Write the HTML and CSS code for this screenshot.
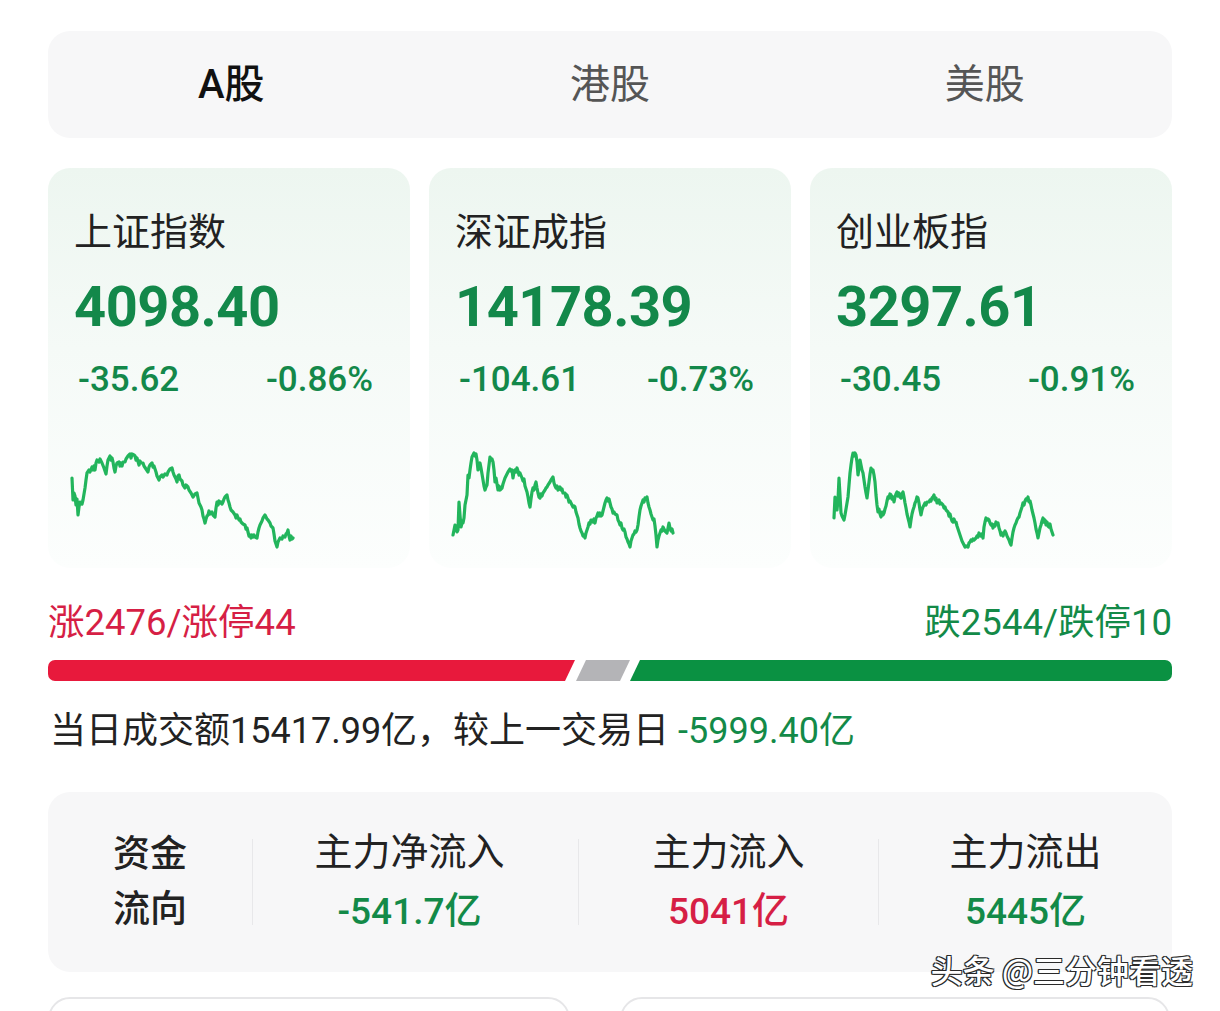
FILE: index.html
```html
<!DOCTYPE html>
<html lang="zh-CN">
<head>
<meta charset="utf-8">
<title>市场</title>
<link rel="stylesheet" href="styles.css">
</head>
<body>
<div class="page">
  <div class="tabs">
    <div class="tab active">A股</div>
    <div class="tab">港股</div>
    <div class="tab">美股</div>
  </div>

  <div class="cards">
    <div class="card">
      <div class="card-title">上证指数</div>
      <div class="card-value">4098.40</div>
      <div class="card-change"><span>-35.62</span><span>-0.86%</span></div>
      <svg class="chart" width="300" height="110" viewBox="74 445 300 110">
        <polyline points="72,478 73,500 74,493 75,496 76,505 77,499 78,515 79,507 80,502 82,504 83,500 85,488 86,480 87,473 89,470 90,472 92,467 93,470 94,466 95,470 96,463 97,460 99,462 100,459 102,463 104,468 106,474 107,466 108,460 110,456 111,460 112,458 113,462 114,468 115,472 116,466 117,463 119,462 120,466 121,463 122,466 123,462 125,462 126,459 128,456 130,454 131,458 132,454 134,455 135,456 136,460 137,458 139,465 140,461 141,463 143,463 144,466 146,469 148,472 149,467 150,465 152,463 153,467 154,466 155,469 156,472 157,476 159,480 160,477 162,475 163,477 165,474 167,475 168,472 170,469 172,468 173,472 174,475 176,479 177,482 178,476 179,475 180,479 182,481 183,485 185,488 186,485 188,487 189,490 191,493 193,497 195,494 197,493 198,498 199,503 201,507 202,510 203,516 204,519 205,523 206,519 207,516 208,515 209,511 210,514 212,512 213,515 215,517 216,508 217,502 218,505 219,501 220,503 221,502 222,504 223,502 224,499 225,497 227,495 228,500 229,503 230,507 231,510 233,512 235,515 236,518 237,515 239,520 240,519 241,522 243,524 245,525 246,529 247,528 248,532 249,536 250,535 251,538 252,535 253,537 254,535 255,537 257,538 258,532 259,528 260,525 262,521 263,518 265,515 266,517 267,519 268,520 270,523 271,526 273,528 274,534 275,541 276,544 277,547 278,542 279,540 280,538 282,539 283,536 285,537 286,534 287,533 288,530 289,536 290,540 291,536 292,539 293,538"/>
      </svg>
    </div>
    <div class="card">
      <div class="card-title">深证成指</div>
      <div class="card-value">14178.39</div>
      <div class="card-change"><span>-104.61</span><span>-0.73%</span></div>
      <svg class="chart" width="300" height="110" viewBox="455 445 300 110">
        <polyline points="453,535 454,530 455,525 456,527 457,532 458,530 459,502 460,515 461,527 462,523 463,523 464,518 465,505 466,500 467,495 468,475 469,478 470,470 471,463 472,457 473,455 474,453 475,456 476,454 477,460 478,470 479,466 480,463 481,468 482,474 483,480 484,486 485,490 486,487 487,485 488,473 489,465 490,457 491,460 492,459 493,462 494,470 495,482 496,478 497,484 498,490 499,486 500,490 502,488 503,484 505,478 506,476 507,474 508,472 510,469 511,471 512,470 513,478 514,472 515,470 516,472 517,468 518,471 519,475 520,473 522,478 523,481 524,479 525,486 527,492 528,497 529,503 530,507 531,499 532,492 533,488 534,490 535,485 536,482 537,488 538,493 539,497 540,498 541,494 542,496 543,493 545,490 546,488 547,487 548,485 550,482 551,480 553,477 554,483 555,486 556,488 557,486 558,490 560,487 561,490 562,489 563,493 565,493 566,497 567,495 568,498 569,502 570,501 572,505 573,507 574,506 575,507 576,512 577,515 578,518 579,524 580,528 581,531 582,533 583,536 584,535 585,538 586,533 587,530 588,527 589,523 590,524 591,520 592,520 593,522 594,519 595,523 596,518 597,516 598,513 599,516 600,513 601,516 602,515 603,511 604,507 605,503 606,500 607,498 608,501 609,499 610,503 611,507 612,509 613,513 614,512 615,514 617,515 618,520 619,522 620,525 621,523 622,528 623,530 624,529 625,532 626,537 627,539 628,542 629,544 630,547 631,541 632,538 633,535 634,534 635,531 636,532 637,530 638,525 639,517 640,510 641,506 642,503 643,500 644,502 645,498 646,499 647,497 648,503 649,507 650,510 651,514 652,517 653,520 654,519 655,526 656,535 657,547 658,540 659,536 660,533 661,530 662,531 663,527 664,529 665,531 667,533 668,528 669,523 670,528 671,531 672,529 673,533"/>
      </svg>
    </div>
    <div class="card">
      <div class="card-title">创业板指</div>
      <div class="card-value">3297.61</div>
      <div class="card-change"><span>-30.45</span><span>-0.91%</span></div>
      <svg class="chart" width="300" height="110" viewBox="835 445 300 110">
        <polyline points="833,518 834,497 835,505 836,510 837,500 838,478 839,495 840,513 841,516 842,518 843,520 844,515 845,509 846,503 847,497 848,485 849,473 850,465 851,458 852,453 853,456 854,453 855,455 856,462 857,475 858,468 859,460 860,465 861,470 862,473 863,480 864,487 865,493 866,498 867,490 868,482 869,474 870,468 871,471 872,470 873,475 874,482 875,495 876,505 877,512 878,509 879,514 880,517 881,512 882,515 883,513 884,509 885,506 886,501 887,497 888,498 889,494 890,495 891,499 892,497 893,502 894,497 895,494 896,492 897,496 898,493 899,497 900,498 901,494 902,492 903,497 904,503 905,508 906,514 907,518 908,522 909,527 910,520 911,514 912,510 913,507 914,503 915,501 916,497 917,498 918,503 919,510 920,515 921,510 922,507 923,505 924,503 925,505 926,502 928,502 929,500 930,501 931,498 932,497 933,495 934,500 935,498 936,503 937,502 938,500 939,504 940,503 942,505 943,508 944,507 945,510 947,512 948,516 949,514 950,518 951,521 952,522 953,519 954,522 955,522 956,526 957,529 958,532 959,535 960,538 961,541 962,543 963,545 964,547 965,546 967,547 968,543 969,542 970,540 971,541 972,539 973,540 975,538 976,536 977,537 978,533 979,535 980,536 981,534 982,538 983,527 984,522 985,518 986,520 987,519 988,520 989,523 990,525 991,524 992,528 993,525 994,526 995,522 996,524 997,523 998,528 999,531 1000,535 1001,533 1002,536 1003,533 1004,531 1005,533 1006,536 1007,538 1008,540 1009,543 1010,545 1011,538 1012,532 1013,528 1014,525 1015,523 1016,520 1017,518 1018,517 1019,513 1020,510 1021,507 1022,503 1023,505 1024,501 1025,499 1026,500 1027,497 1028,502 1029,501 1030,505 1031,510 1032,514 1033,518 1034,523 1035,529 1036,533 1037,538 1038,533 1039,528 1040,525 1041,521 1042,518 1043,522 1044,520 1045,525 1046,522 1047,526 1048,527 1049,524 1050,529 1051,532 1052,535"/>
      </svg>
    </div>
  </div>

  <div class="stats">
    <span class="up">涨2476/涨停44</span>
    <span class="down">跌2544/跌停10</span>
  </div>

  <div class="bar">
    <div class="bar-up"></div>
    <div class="bar-flat"></div>
    <div class="bar-down"></div>
  </div>

  <div class="turnover">当日成交额15417.99亿，较上一交易日 <span class="down">-5999.40亿</span></div>

  <div class="flow">
    <div class="flow-title">资金<br>流向</div>
    <div class="flow-col col-net">
      <div class="flow-label">主力净流入</div>
      <div class="flow-value down">-541.7亿</div>
    </div>
    <div class="flow-col">
      <div class="flow-label">主力流入</div>
      <div class="flow-value up">5041亿</div>
    </div>
    <div class="flow-col">
      <div class="flow-label">主力流出</div>
      <div class="flow-value down">5445亿</div>
    </div>
  </div>

  <div class="more">
    <div class="more-card"></div>
    <div class="more-card"></div>
  </div>

  <div class="watermark">头条 @三分钟看透</div>
</div>
</body>
</html>
```

FILE: styles.css
```css
html, body {
  margin: 0;
  padding: 0;
  background: #ffffff;
}

body {
  font-family: "Roboto", "Noto Sans CJK SC", sans-serif;
  color: #222222;
  overflow: hidden;
}

.page {
  position: relative;
  box-sizing: border-box;
  width: 1220px;
  height: 1011px;
  padding: 31px 48px 0;
  overflow: hidden;
}

/* tabs */
.tabs {
  display: grid;
  grid-template-columns: repeat(3, 1fr);
  align-items: center;
  height: 107px;
  background: #f7f7f8;
  border-radius: 22px;
}

.tab {
  text-align: center;
  font-size: 40px;
  line-height: 48px;
  color: #555555;
}

.tab.active {
  color: #111111;
  font-weight: 500;
  padding-right: 8px;
}

/* index cards */
.cards {
  display: grid;
  grid-template-columns: repeat(3, 1fr);
  gap: 19px;
  margin-top: 30px;
}

.card {
  box-sizing: border-box;
  height: 400px;
  padding: 41px 37px 0 26px;
  border-radius: 22px;
  background: linear-gradient(180deg, #edf6f0 0%, #f5faf7 45%, #fcfefd 100%);
  overflow: hidden;
}

.card-title {
  font-size: 38px;
  line-height: 46px;
  color: #222222;
}

.card-value {
  margin-top: 20px;
  font-size: 56px;
  line-height: 64px;
  font-weight: 700;
  letter-spacing: -0.5px;
  color: #13884a;
}

.card-change {
  display: flex;
  justify-content: space-between;
  margin-top: 19px;
  padding-left: 4px;
  font-size: 35px;
  line-height: 44px;
  font-weight: 500;
  color: #13884a;
}

.chart {
  display: block;
  margin-top: 43px;
  overflow: visible;
}

.chart polyline {
  fill: none;
  stroke: #22b55c;
  stroke-width: 3.2;
  stroke-linejoin: round;
  stroke-linecap: round;
}

/* up / down stats */
.stats {
  display: flex;
  justify-content: space-between;
  margin-top: 33px;
  font-size: 36.5px;
  line-height: 44px;
}

.up {
  color: #d61f45;
}

.down {
  color: #138a48;
}

.bar {
  display: flex;
  height: 21px;
  margin-top: 15px;
}

.bar-up {
  width: 527px;
  background: #e8193c;
  border-radius: 7px 0 0 7px;
  clip-path: polygon(0 0, 100% 0, calc(100% - 10px) 100%, 0 100%);
}

.bar-flat {
  width: 54px;
  margin-left: 1px;
  background: #b4b4b7;
  clip-path: polygon(10px 0, 100% 0, calc(100% - 10px) 100%, 0 100%);
}

.bar-down {
  flex: 1;
  background: #0a9142;
  border-radius: 0 7px 7px 0;
  clip-path: polygon(10px 0, 100% 0, 100% 100%, 0 100%);
}

.turnover {
  margin-top: 28px;
  padding-left: 2px;
  font-size: 36px;
  line-height: 44px;
  color: #222222;
}

/* fund flow */
.flow {
  display: grid;
  grid-template-columns: 204px 326px 300px 1fr;
  align-items: center;
  height: 180px;
  margin-top: 39px;
  background: #f7f7f8;
  border-radius: 22px;
}

.flow-title {
  text-align: center;
  font-size: 37px;
  line-height: 55px;
  font-weight: 500;
  color: #222222;
}

.flow-col {
  display: flex;
  flex-direction: column;
  justify-content: center;
  align-items: center;
  height: 86px;
  border-left: 1px solid #e8e8ea;
}

.col-net {
  padding-right: 12px;
}

.flow-label {
  font-size: 38px;
  line-height: 59px;
  color: #222222;
  white-space: nowrap;
}

.flow-value {
  font-size: 37px;
  line-height: 59px;
  font-weight: 500;
  white-space: nowrap;
}

/* next cards peeking */
.more {
  display: grid;
  grid-template-columns: 522px 550px;
  gap: 50px;
  margin-top: 25px;
}

.more-card {
  box-sizing: border-box;
  height: 100px;
  border: 2px solid #e6e6e8;
  border-radius: 22px;
  background: #ffffff;
}

.watermark {
  position: absolute;
  right: 27px;
  top: 949px;
  font-family: "Noto Sans CJK SC", sans-serif;
  font-size: 32px;
  line-height: 40px;
  font-weight: 500;
  color: #ffffff;
  text-shadow: -1px -1px 0 #2a2a2a, 1px -1px 0 #2a2a2a, -1px 1px 0 #2a2a2a, 1px 1px 0 #2a2a2a, -1px 0 1px #000;
}
```
